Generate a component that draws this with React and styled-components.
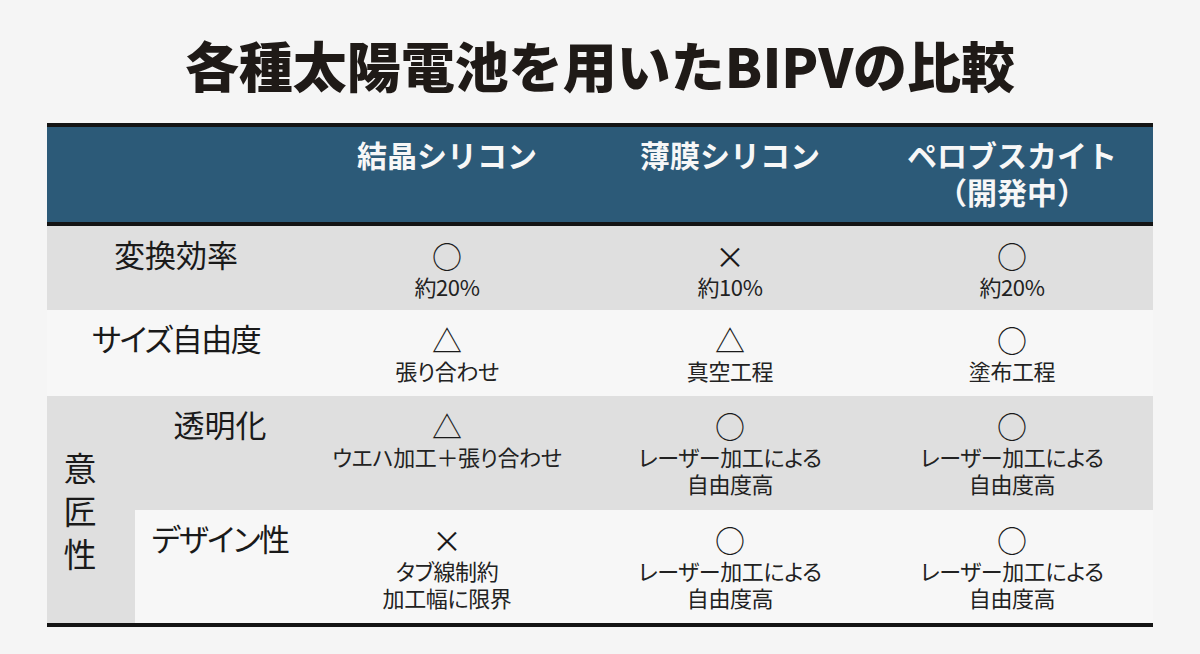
import React from 'react';
import styled, { createGlobalStyle } from 'styled-components';

const GlobalStyle = createGlobalStyle`
  html, body {
    margin: 0;
    padding: 0;
    background: #f5f5f5;
  }
  body {
    font-family: "Noto Sans CJK JP", "Noto Sans", sans-serif;
    color: #1c1c1c;
  }
`;

const Page = styled.div`
  width: 1200px;
  height: 654px;
  padding-top: 35px;
  box-sizing: border-box;
  background: #f5f5f5;
`;

const Title = styled.h1`
  margin: 0 0 28px;
  text-align: center;
  font-size: 54px;
  line-height: 60px;
  font-weight: 900;
  color: #1f1a17;
`;

const Table = styled.div`
  width: 1106px;
  margin: 0 auto;
`;

const columns = '88px 170px 284px 282px 282px';

const HeaderRow = styled.div`
  display: grid;
  grid-template-columns: ${columns};
  height: 95px;
  background: #2c5a78;
  border-top: 4px solid #141414;
  border-bottom: 4px solid #141414;
`;

const HeaderCell = styled.div`
  grid-column: ${props => props.$span || 'auto'};
  padding-top: 9px;
  text-align: center;
  font-size: 30px;
  line-height: 37px;
  font-weight: 700;
  color: #f7f7f7;
`;

const Body = styled.div`
  display: grid;
  grid-template-columns: ${columns};
  grid-template-rows: 84px 86px 114px 113px;
  border-bottom: 4px solid #141414;
`;

const Cell = styled.div`
  background: ${props => (props.$tone === 'gray' ? '#dfdfdf' : '#f7f7f7')};
  padding-top: 12px;
  box-sizing: border-box;
  text-align: center;
`;

const LabelCell = styled(Cell)`
  grid-column: ${props => props.$span || 'auto'};
  padding-top: 13px;
  font-size: 31px;
  line-height: 30px;
  letter-spacing: ${props => (props.$kana ? '-1.5px' : '0')};
  font-feature-settings: "palt";
  color: #1a1a1a;
`;

const GroupCell = styled(Cell)`
  grid-row: 3 / span 2;
  grid-column: 1;
  display: flex;
  align-items: center;
  padding: 0 0 0 16px;
  font-size: 33px;
  color: #1a1a1a;
`;

const VerticalText = styled.span`
  writing-mode: vertical-rl;
  letter-spacing: 10px;
  line-height: 1;
  margin-top: 14px;
`;

const Mark = styled.div`
  font-size: 30px;
  line-height: 35px;
  height: 35px;
  color: #1a1a1a;
`;

const Note = styled.div`
  font-size: 22px;
  line-height: 27px;
  letter-spacing: -0.4px;
  font-feature-settings: "palt";
  color: #222;
`;

const rows = [
  {
    label: '変換効率',
    tone: 'gray',
    cells: [
      { mark: '○', note: ['約20%'] },
      { mark: '×', note: ['約10%'] },
      { mark: '○', note: ['約20%'] },
    ],
  },
  {
    label: 'サイズ自由度',
    kana: true,
    tone: 'light',
    cells: [
      { mark: '△', note: ['張り合わせ'] },
      { mark: '△', note: ['真空工程'] },
      { mark: '○', note: ['塗布工程'] },
    ],
  },
  {
    label: '透明化',
    sub: true,
    tone: 'gray',
    cells: [
      { mark: '△', note: ['ウエハ加工＋張り合わせ'] },
      { mark: '○', note: ['レーザー加工による', '自由度高'] },
      { mark: '○', note: ['レーザー加工による', '自由度高'] },
    ],
  },
  {
    label: 'デザイン性',
    sub: true,
    kana: true,
    tone: 'light',
    cells: [
      { mark: '×', note: ['タブ線制約', '加工幅に限界'] },
      { mark: '○', note: ['レーザー加工による', '自由度高'] },
      { mark: '○', note: ['レーザー加工による', '自由度高'] },
    ],
  },
];

const App = () => (
  <Page>
    <GlobalStyle />
    <Title>各種太陽電池を用いたBIPVの比較</Title>
    <Table>
      <HeaderRow>
        <HeaderCell $span="1 / span 2" />
        <HeaderCell>結晶シリコン</HeaderCell>
        <HeaderCell>薄膜シリコン</HeaderCell>
        <HeaderCell>
          ペロブスカイト
          <br />
          （開発中）
        </HeaderCell>
      </HeaderRow>
      <Body>
        {rows.map((row, i) => (
          <React.Fragment key={row.label}>
            {i === 2 && (
              <GroupCell $tone="gray">
                <VerticalText>意匠性</VerticalText>
              </GroupCell>
            )}
            <LabelCell
              $tone={row.tone}
              $kana={row.kana}
              $span={row.sub ? '2' : '1 / span 2'}
            >
              {row.label}
            </LabelCell>
            {row.cells.map((c, j) => (
              <Cell key={j} $tone={row.tone}>
                <Mark>{c.mark}</Mark>
                <Note>
                  {c.note.map((n, k) => (
                    <React.Fragment key={n}>
                      {k > 0 && <br />}
                      {n}
                    </React.Fragment>
                  ))}
                </Note>
              </Cell>
            ))}
          </React.Fragment>
        ))}
      </Body>
    </Table>
  </Page>
);

export default App;
